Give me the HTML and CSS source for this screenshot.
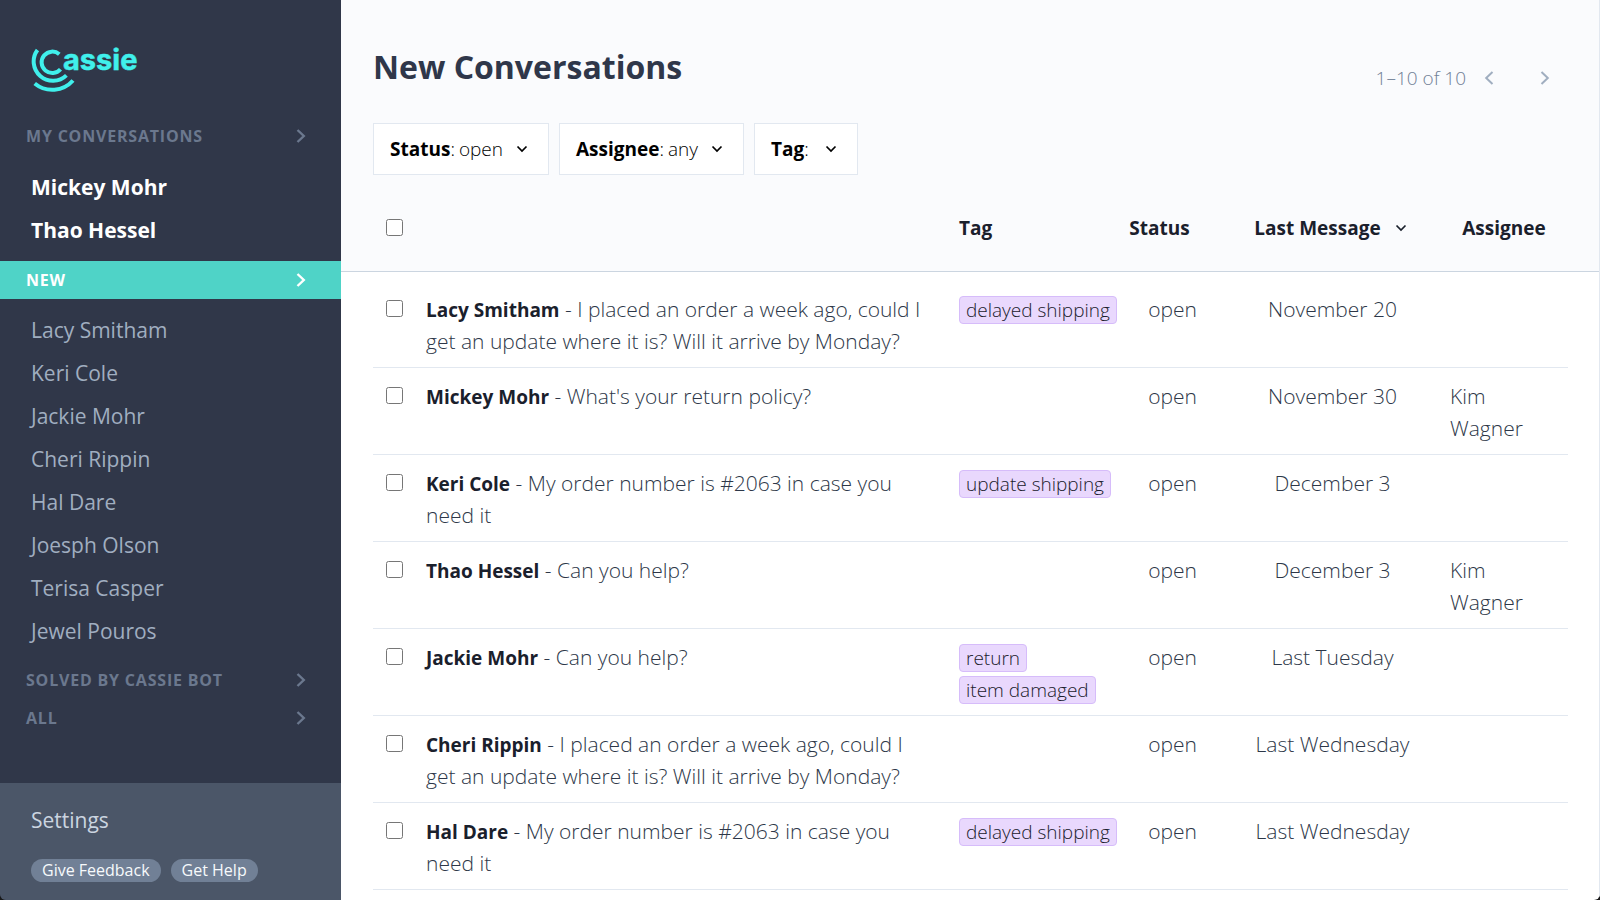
FILE: index.html
```html
<!DOCTYPE html>
<html lang="en">
<head>
<meta charset="utf-8">
<title>Cassie – New Conversations</title>
<link rel="stylesheet" href="styles.css">
</head>
<body>
<svg class="defs" width="0" height="0" aria-hidden="true">
  <symbol id="right" viewBox="0 0 10 14"><path d="M1.500 1 7.800 7l-6.300 6"/></symbol>
  <symbol id="left" viewBox="0 0 10 14"><path d="M8.500 1 2.200 7l6.300 6"/></symbol>
  <symbol id="down" viewBox="0 0 12 8"><path d="M1.500 1.500 6 6l4.500-4.500"/></symbol>
</svg>
<div class="app">
  <aside class="sidebar">
    <a class="logo" href="#" aria-label="Cassie">
      <svg width="120" height="56" viewBox="0 -10 120 56">
        <g class="arcs">
          <path d="M28.300 6.200A10.700 10.700 0 1 0 29.500 21.200"/>
          <path d="M6.500 2A19.300 19.300 0 0 0 35.400 27.400"/>
          <path d="M3.700 35.500A27.700 27.700 0 0 0 42 32.500"/>
        </g>
        <text class="wordmark" x="32" y="22">assie</text>
      </svg>
    </a>
    <nav class="nav">
      <a class="group" href="#">My Conversations<svg class="chev"><use href="#right"/></svg></a>
      <ul class="people unread">
        <li><a href="#">Mickey Mohr</a></li>
        <li><a href="#">Thao Hessel</a></li>
      </ul>
      <a class="group active" href="#">New<svg class="chev"><use href="#right"/></svg></a>
      <ul class="people">
        <li><a href="#">Lacy Smitham</a></li>
        <li><a href="#">Keri Cole</a></li>
        <li><a href="#">Jackie Mohr</a></li>
        <li><a href="#">Cheri Rippin</a></li>
        <li><a href="#">Hal Dare</a></li>
        <li><a href="#">Joesph Olson</a></li>
        <li><a href="#">Terisa Casper</a></li>
        <li><a href="#">Jewel Pouros</a></li>
      </ul>
      <a class="group" href="#">Solved by Cassie Bot<svg class="chev"><use href="#right"/></svg></a>
      <a class="group" href="#">All<svg class="chev"><use href="#right"/></svg></a>
    </nav>
    <footer class="foot">
      <a class="settings" href="#">Settings</a>
      <div class="pills">
        <button class="pill" type="button">Give Feedback</button>
        <button class="pill" type="button">Get Help</button>
      </div>
    </footer>
  </aside>
  <main class="main">
    <header class="head">
      <div class="title-row">
        <h1>New Conversations</h1>
        <div class="pager">
          <span>1–10 of 10</span>
          <button type="button" aria-label="Previous page"><svg class="chev"><use href="#left"/></svg></button>
          <button type="button" aria-label="Next page"><svg class="chev"><use href="#right"/></svg></button>
        </div>
      </div>
      <div class="filters">
        <label class="filter"><span><b>Status</b>:</span><select><option>open</option></select><svg class="down"><use href="#down"/></svg></label>
        <label class="filter"><span><b>Assignee</b>:</span><select><option>any</option></select><svg class="down"><use href="#down"/></svg></label>
        <label class="filter"><span><b>Tag</b>:</span><select><option></option></select><svg class="down"><use href="#down"/></svg></label>
      </div>
    </header>
    <div class="list">
      <table>
        <colgroup><col class="c-check"><col><col class="c-tag"><col class="c-status"><col class="c-last"><col class="c-who"></colgroup>
        <thead>
          <tr>
            <th class="check"><input type="checkbox" aria-label="Select all"></th>
            <th></th>
            <th class="tags">Tag</th>
            <th class="status">Status</th>
            <th class="last"><button class="sort" type="button">Last Message<svg class="down"><use href="#down"/></svg></button></th>
            <th class="who">Assignee</th>
          </tr>
        </thead>
        <tbody>
          <tr>
            <td class="check"><input type="checkbox" aria-label="Select Lacy Smitham"></td>
            <td class="msg"><b>Lacy Smitham</b> - I placed an order a week ago, could I get an update where it is? Will it arrive by Monday?</td>
            <td class="tags"><span class="tag">delayed shipping</span></td>
            <td class="status">open</td><td class="last">November 20</td><td class="who"></td>
          </tr>
          <tr>
            <td class="check"><input type="checkbox" aria-label="Select Mickey Mohr"></td>
            <td class="msg"><b>Mickey Mohr</b> - What's your return policy?</td>
            <td class="tags"></td>
            <td class="status">open</td><td class="last">November 30</td><td class="who">Kim Wagner</td>
          </tr>
          <tr>
            <td class="check"><input type="checkbox" aria-label="Select Keri Cole"></td>
            <td class="msg"><b>Keri Cole</b> - My order number is #2063 in case you need it</td>
            <td class="tags"><span class="tag">update shipping</span></td>
            <td class="status">open</td><td class="last">December 3</td><td class="who"></td>
          </tr>
          <tr>
            <td class="check"><input type="checkbox" aria-label="Select Thao Hessel"></td>
            <td class="msg"><b>Thao Hessel</b> - Can you help?</td>
            <td class="tags"></td>
            <td class="status">open</td><td class="last">December 3</td><td class="who">Kim Wagner</td>
          </tr>
          <tr>
            <td class="check"><input type="checkbox" aria-label="Select Jackie Mohr"></td>
            <td class="msg"><b>Jackie Mohr</b> - Can you help?</td>
            <td class="tags"><span class="tag">return</span> <span class="tag">item damaged</span></td>
            <td class="status">open</td><td class="last">Last Tuesday</td><td class="who"></td>
          </tr>
          <tr>
            <td class="check"><input type="checkbox" aria-label="Select Cheri Rippin"></td>
            <td class="msg"><b>Cheri Rippin</b> - I placed an order a week ago, could I get an update where it is? Will it arrive by Monday?</td>
            <td class="tags"></td>
            <td class="status">open</td><td class="last">Last Wednesday</td><td class="who"></td>
          </tr>
          <tr>
            <td class="check"><input type="checkbox" aria-label="Select Hal Dare"></td>
            <td class="msg"><b>Hal Dare</b> - My order number is #2063 in case you need it</td>
            <td class="tags"><span class="tag">delayed shipping</span></td>
            <td class="status">open</td><td class="last">Last Wednesday</td><td class="who"></td>
          </tr>
        </tbody>
      </table>
    </div>
  </main>
</div>
</body>
</html>
```
FILE: styles.css
```css
* { box-sizing: border-box; }
body {
  margin: 0;
  background: #1a1a1a;
  font-family: "Open Sans", "Noto Sans", sans-serif;
  font-weight: 300;
  font-size: 22px;
  line-height: 32px;
  color: #1a202c;
}
a { color: inherit; text-decoration: none; }
button, select, input { font: inherit; color: inherit; }
button { background: none; border: 0; padding: 0; cursor: pointer; }
b { font-weight: 700; }
svg { display: block; fill: none; stroke: currentColor; flex: none; }
.defs { position: absolute; }
.chev { width: 10px; height: 14px; stroke-width: 2.4; }
.down { width: 12px; height: 8px; stroke-width: 1.7; pointer-events: none; }

.app {
  display: flex;
  height: 100vh;
  border-radius: 0 0 6px 6px;
  overflow: hidden;
}

.sidebar {
  flex: none;
  display: flex;
  flex-direction: column;
  width: 341px;
  background: #303749;
}
.logo { display: block; padding: 38px 31px 23px; color: #40f0ec; }
.arcs { stroke-width: 4; }
.wordmark {
  fill: currentColor;
  stroke-width: 0.5;
  font-family: Inter, sans-serif;
  font-weight: 700;
  font-size: 29px;
  line-height: 32px;
}
.nav { flex: 1; }
.group {
  display: flex;
  align-items: center;
  justify-content: space-between;
  height: 38px;
  padding: 0 35px 0 26px;
  font-size: 16px;
  font-weight: 700;
  letter-spacing: 0.05em;
  text-transform: uppercase;
  color: #6b788e;
}
.group.active { background: #4fd3c7; color: #fff; }
.people { list-style: none; margin: 0; padding: 10px 31px 8px; }
.people.unread { padding-top: 11px; padding-bottom: 9px; }
.people a { display: block; font-size: 21px; line-height: 43px; font-weight: 400; color: #a0aec0; }
.people.unread a { font-weight: 700; color: #fff; }
.foot { padding: 21px 31px 18px; background: #4b5668; }
.settings { display: block; font-size: 21px; font-weight: 400; color: #cbd5e0; }
.pills { display: flex; gap: 10px; margin-top: 23px; }
.pill {
  padding: 0 11px;
  border-radius: 12px;
  background: #718096;
  color: #f7fafc;
  font-size: 16px;
  font-weight: 400;
  line-height: 23px;
}

.main {
  flex: 1;
  min-width: 0;
  overflow: hidden;
  background: #fff;
  border-right: 1px solid #e2e8f0;
}
.head { padding: 43px 32px 9px; background: #fafbfd; }
.title-row { display: flex; justify-content: space-between; }
h1 { margin: 0; font-size: 32px; line-height: 48px; font-weight: 700; color: #2f374a; }
.pager { display: flex; align-items: center; padding: 20px 17px 0 0; font-size: 19px; line-height: 30px; color: #718096; }
.pager .chev { stroke-width: 2; }
.pager button { padding: 0 0 0 18px; color: #a0aec0; }
.pager button + button { padding-left: 46px; }
.filters { display: flex; gap: 10px; margin-top: 30px; }
.filter {
  display: flex;
  align-items: center;
  height: 52px;
  padding: 0 20px 0 16px;
  border: 1px solid #e2e8f0;
  background: #fff;
  font-size: 19px;
  color: #000;
}
.filter select { appearance: none; border: 0; padding: 0; margin: 0 12px 0 4px; background: none; }

.list { padding: 0 31px 0 32px; }
table { width: 100%; table-layout: fixed; border-collapse: separate; border-spacing: 0; }
.c-check { width: 43px; }
.c-tag { width: 171px; }
.c-status { width: 105px; }
.c-last { width: 215px; }
.c-who { width: 128px; }
thead tr {
  background: #fafbfd;
  box-shadow: -32px 0 #fafbfd, 32px 0 #fafbfd, -32px 1px #cbd5e0, 32px 1px #cbd5e0, 0 1px #cbd5e0;
}
th { height: 87px; padding: 0 10px; font-size: 19px; font-weight: 700; text-align: left; white-space: nowrap; }
.sort { display: inline-flex; align-items: center; gap: 14px; font-weight: 700; }
td { padding: 12px 10px 10px; vertical-align: top; border-bottom: 1px solid #e2e8f0; font-size: 21px; color: #2d3748; }
tbody tr:first-child td { padding-top: 22px; }
.check { padding-left: 13px; padding-right: 0; }
.check input { display: block; width: 17px; height: 17px; margin: 0; }
td.check input { margin-top: 7px; }
.msg { padding-right: 20px; }
.msg b { font-size: 19px; line-height: 20px; color: #1a202c; }
.status, .last { text-align: center; padding-left: 0; padding-right: 0; }
th.status { padding-right: 26px; }
th.last { padding-right: 4px; }
th.who { text-align: center; }
.tags { padding-right: 0; }
.tag {
  display: inline-block;
  height: 28px;
  margin: 3px 0 1px;
  padding: 0 6px;
  border: 1px solid #d6bcfa;
  border-radius: 4px;
  background: #e9d8fd;
  color: #1a202c;
  font-size: 19px;
  line-height: 26px;
  vertical-align: top;
}
```
